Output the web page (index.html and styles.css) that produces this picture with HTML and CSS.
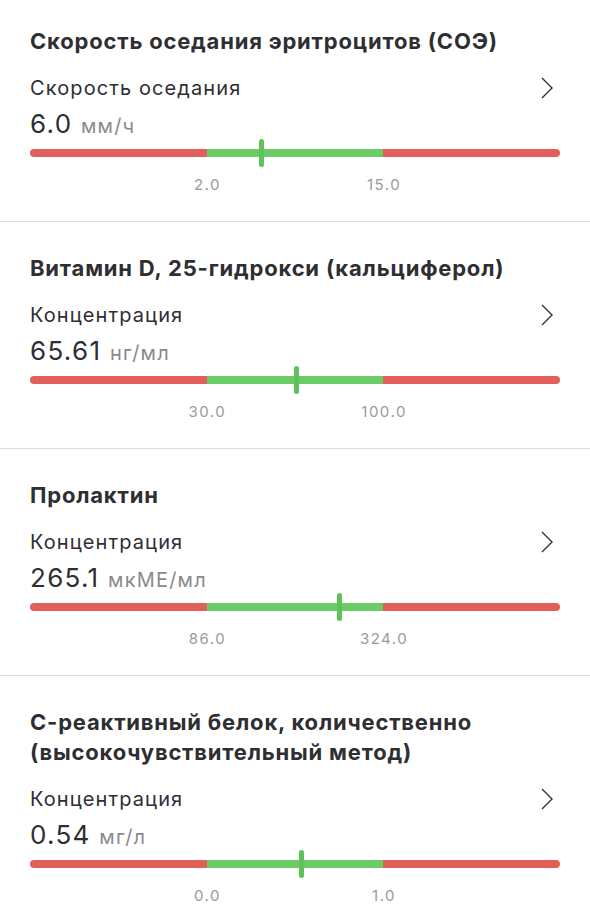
FILE: index.html
```html
<!DOCTYPE html>
<html lang="ru">
<head>
  <meta charset="UTF-8">
  <meta name="viewport" content="width=device-width, initial-scale=1.0">
  <title>Результаты анализов</title>
  <link rel="stylesheet" href="styles.css">
</head>
<body>
  <div class="results">

    <section class="result">
      <h2 class="result-title">Скорость оседания эритроцитов (СОЭ)</h2>
      <div class="result-row">
        <span class="result-label">Скорость оседания</span>
        <svg class="chevron" viewBox="0 0 12 22"><path d="M1 1 L11 11 L1 21"/></svg>
      </div>
      <div class="result-value">6.0 <span class="unit">мм/ч</span></div>
      <div class="scale">
        <div class="bar">
          <span class="seg seg-low"></span>
          <span class="seg seg-norm"></span>
          <span class="seg seg-high"></span>
          <span class="marker" style="left: 43.6%"></span>
        </div>
        <div class="ticks">
          <span class="tick tick-min">2.0</span>
          <span class="tick tick-max">15.0</span>
        </div>
      </div>
    </section>

    <section class="result">
      <h2 class="result-title">Витамин D, 25-гидрокси (кальциферол)</h2>
      <div class="result-row">
        <span class="result-label">Концентрация</span>
        <svg class="chevron" viewBox="0 0 12 22"><path d="M1 1 L11 11 L1 21"/></svg>
      </div>
      <div class="result-value">65.61 <span class="unit">нг/мл</span></div>
      <div class="scale">
        <div class="bar">
          <span class="seg seg-low"></span>
          <span class="seg seg-norm"></span>
          <span class="seg seg-high"></span>
          <span class="marker" style="left: 50.2%"></span>
        </div>
        <div class="ticks">
          <span class="tick tick-min">30.0</span>
          <span class="tick tick-max">100.0</span>
        </div>
      </div>
    </section>

    <section class="result">
      <h2 class="result-title">Пролактин</h2>
      <div class="result-row">
        <span class="result-label">Концентрация</span>
        <svg class="chevron" viewBox="0 0 12 22"><path d="M1 1 L11 11 L1 21"/></svg>
      </div>
      <div class="result-value">265.1 <span class="unit">мкМЕ/мл</span></div>
      <div class="scale">
        <div class="bar">
          <span class="seg seg-low"></span>
          <span class="seg seg-norm"></span>
          <span class="seg seg-high"></span>
          <span class="marker" style="left: 58.4%"></span>
        </div>
        <div class="ticks">
          <span class="tick tick-min">86.0</span>
          <span class="tick tick-max">324.0</span>
        </div>
      </div>
    </section>

    <section class="result">
      <h2 class="result-title">С-реактивный белок, количественно (высокочувствительный метод)</h2>
      <div class="result-row">
        <span class="result-label">Концентрация</span>
        <svg class="chevron" viewBox="0 0 12 22"><path d="M1 1 L11 11 L1 21"/></svg>
      </div>
      <div class="result-value">0.54 <span class="unit">мг/л</span></div>
      <div class="scale">
        <div class="bar">
          <span class="seg seg-low"></span>
          <span class="seg seg-norm"></span>
          <span class="seg seg-high"></span>
          <span class="marker" style="left: 51.2%"></span>
        </div>
        <div class="ticks">
          <span class="tick tick-min">0.0</span>
          <span class="tick tick-max">1.0</span>
        </div>
      </div>
    </section>

  </div>
</body>
</html>
```

FILE: styles.css
```css
:root {
  --text-color: #2e2e33;
  --muted-color: #8a8a8e;
  --tick-color: #9a9a9e;
  --low-color: #e25f5a;
  --norm-color: #6acb67;
  --marker-color: #5ec25b;
  --divider-color: #dcdcde;
}

* {
  box-sizing: border-box;
  margin: 0;
  padding: 0;
}

body {
  font-family: 'Inter', 'Noto Sans', sans-serif;
  background-color: #fff;
  color: var(--text-color);
}

.result {
  padding: 31px 30px 26px;
  border-bottom: 1px solid var(--divider-color);
}

.result:first-child {
  padding-top: 26px;
}

.result-title {
  font-size: 22px;
  font-weight: 700;
  line-height: 30px;
  letter-spacing: 0.8px;
}

.result-row {
  display: flex;
  justify-content: space-between;
  align-items: center;
  margin-top: 17px;
}

.result-label {
  font-size: 20px;
  line-height: 30px;
  font-weight: 400;
  letter-spacing: 1.1px;
}

.chevron {
  width: 12px;
  height: 22px;
  margin-right: 7px;
  fill: none;
  stroke: #333;
  stroke-width: 1.4;
}

.result-value {
  font-size: 26px;
  line-height: 34px;
  letter-spacing: 1.3px;
  margin-top: 4px;
}

.unit {
  font-size: 20px;
  line-height: 1;
  color: var(--muted-color);
  letter-spacing: 1.2px;
}

.scale {
  margin-top: 8px;
}

.bar {
  position: relative;
  display: flex;
  height: 8px;
}

.seg {
  flex: 1;
}

.seg-low {
  background-color: var(--low-color);
  border-radius: 4px 0 0 4px;
}

.seg-norm {
  background-color: var(--norm-color);
}

.seg-high {
  background-color: var(--low-color);
  border-radius: 0 4px 4px 0;
}

.marker {
  position: absolute;
  top: -10px;
  width: 5px;
  height: 28px;
  margin-left: -2.5px;
  border-radius: 3px;
  background-color: var(--marker-color);
}

.ticks {
  display: grid;
  grid-template-columns: repeat(6, 1fr);
  margin-top: 18px;
  font-size: 15px;
  line-height: 20px;
  letter-spacing: 1.5px;
  color: var(--tick-color);
}

.tick {
  text-align: center;
  padding-left: 1.5px;
}

.tick-min {
  grid-column: 2 / span 2;
}

.tick-max {
  grid-column: 4 / span 2;
}
```
